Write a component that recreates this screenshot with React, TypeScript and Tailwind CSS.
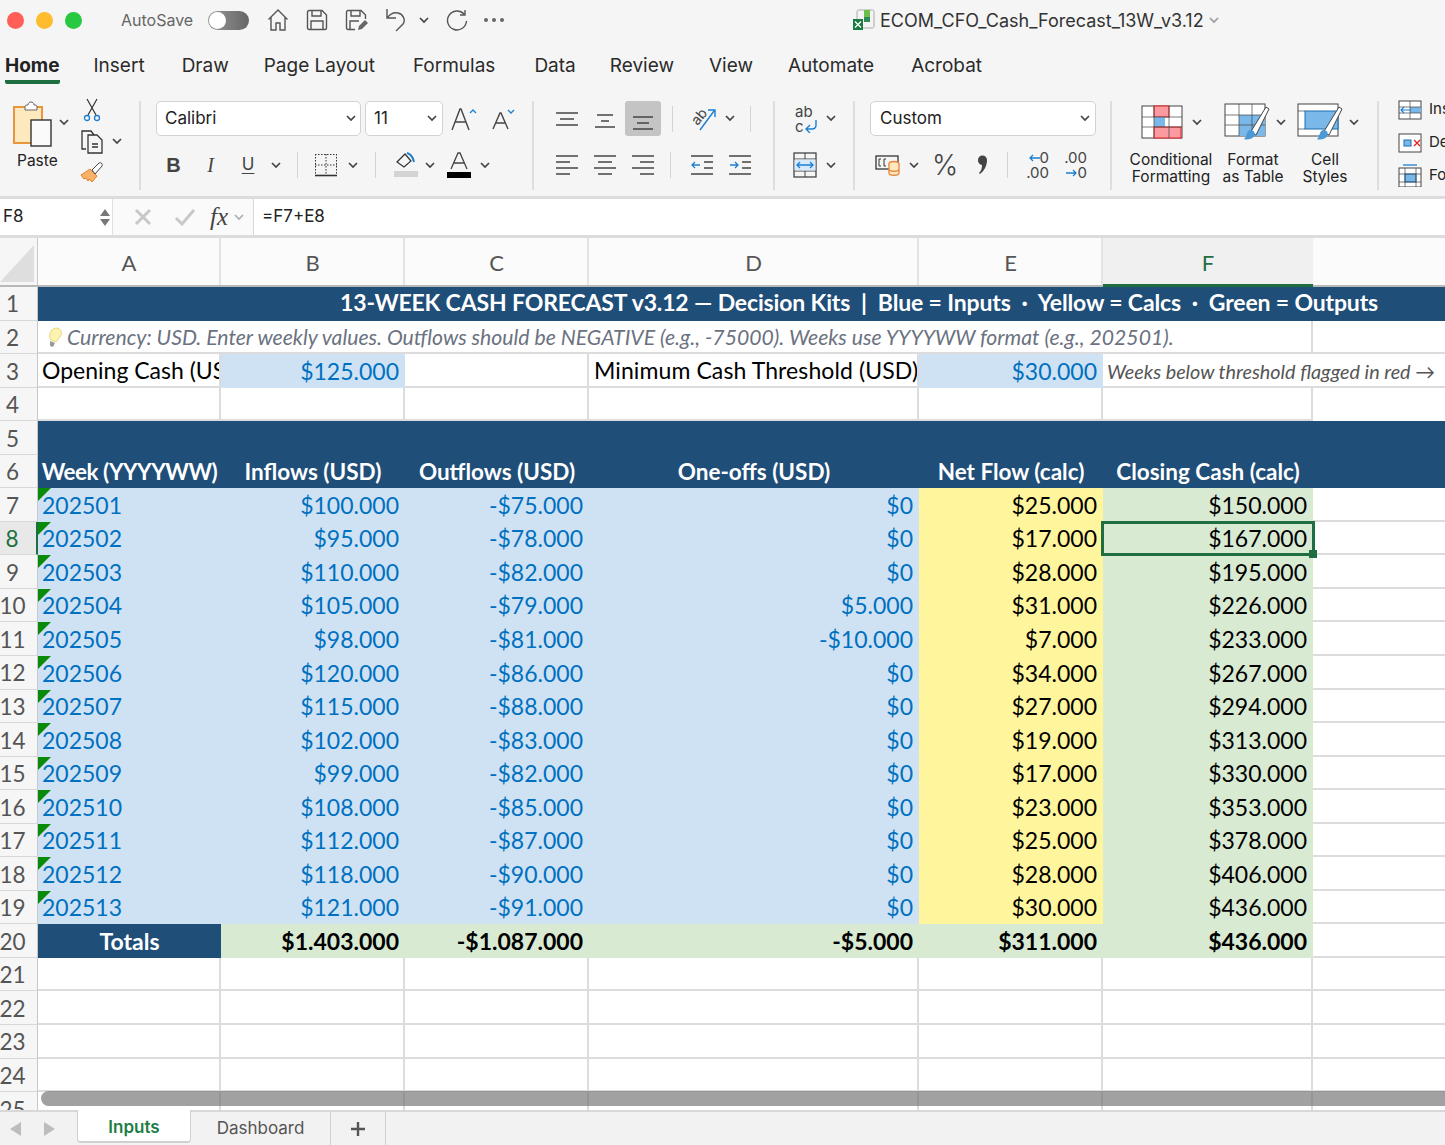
import React from 'react';

const sheetFont = "font-['Lato','Liberation_Sans',sans-serif]";
const uiFont = "font-['Inter','Liberation_Sans',sans-serif]";

const A = 'w-[183px]';
const B = 'w-[184px]';
const C = 'w-[184px]';
const D = 'w-[330px]';
const E = 'w-[184px]';
const F = 'w-[210px]';
const G = 'flex-1';
const colWidths = [A, B, C, D, E, F, G];

const tabs = [
  { label: 'Home', cls: 'ml-[5px] font-bold text-[#222] border-b-[4px] border-[#1e6e42] rounded-b-[2px]' },
  { label: 'Insert', cls: 'ml-[34px]' },
  { label: 'Draw', cls: 'ml-[37px]' },
  { label: 'Page Layout', cls: 'ml-[35px]' },
  { label: 'Formulas', cls: 'ml-[38px]' },
  { label: 'Data', cls: 'ml-[39px]' },
  { label: 'Review', cls: 'ml-[34px]' },
  { label: 'View', cls: 'ml-[35px]' },
  { label: 'Automate', cls: 'ml-[35px]' },
  { label: 'Acrobat', cls: 'ml-[37px]' },
];

const weeks = [
  ['202501', '$100.000', '-$75.000', '$0', '$25.000', '$150.000'],
  ['202502', '$95.000', '-$78.000', '$0', '$17.000', '$167.000'],
  ['202503', '$110.000', '-$82.000', '$0', '$28.000', '$195.000'],
  ['202504', '$105.000', '-$79.000', '$5.000', '$31.000', '$226.000'],
  ['202505', '$98.000', '-$81.000', '-$10.000', '$7.000', '$233.000'],
  ['202506', '$120.000', '-$86.000', '$0', '$34.000', '$267.000'],
  ['202507', '$115.000', '-$88.000', '$0', '$27.000', '$294.000'],
  ['202508', '$102.000', '-$83.000', '$0', '$19.000', '$313.000'],
  ['202509', '$99.000', '-$82.000', '$0', '$17.000', '$330.000'],
  ['202510', '$108.000', '-$85.000', '$0', '$23.000', '$353.000'],
  ['202511', '$112.000', '-$87.000', '$0', '$25.000', '$378.000'],
  ['202512', '$118.000', '-$90.000', '$0', '$28.000', '$406.000'],
  ['202513', '$121.000', '-$91.000', '$0', '$30.000', '$436.000'],
];

const Chev = ({ className = '' }: { className?: string }) => (
  <svg width="10" height="7" viewBox="0 0 10 7" className={className}>
    <path d="M1 1l4 4 4-4" fill="none" stroke="#444" strokeWidth="1.7" />
  </svg>
);

const Lines = ({ rows }: { rows: number[][] }) => (
  <svg width="24" height="24" viewBox="0 0 24 24">
    {rows.map((r, i) => (
      <path key={i} d={`M${r[0]} ${r[2]}H${r[1]}`} stroke="#444" strokeWidth="1.5" />
    ))}
  </svg>
);

const RowHead = ({ n, active }: { n: number; active?: boolean }) => (
  <div
    className={`w-[38px] shrink-0 h-full flex items-center justify-center pr-[12px] pt-[2px] text-[22.5px] font-normal tracking-normal border-b border-[#d8d8d8] ${
      active ? 'bg-[#e8e8e8] text-[#1e6e42] border-r-[2px] border-r-[#1e6e42]' : 'bg-[#f6f6f6] text-[#555] border-r border-r-[#c8c8c8]'
    }`}
  >
    {n}
  </div>
);

const GridCell = ({ w, children, className = '' }: { w: string; children?: React.ReactNode; className?: string }) => (
  <div className={`${w} h-full border-r-2 border-b-2 border-[#dcdcdc] bg-white flex items-center overflow-hidden whitespace-nowrap ${className}`}>
    {children}
  </div>
);

const Fill = ({ w, bg, children, className = '' }: { w: string; bg: string; children?: React.ReactNode; className?: string }) => (
  <div className={`${w} h-full ${bg} flex items-center justify-end pr-[6px] whitespace-nowrap relative ${className}`}>{children}</div>
);

const HeadCell = ({ w, children }: { w: string; children?: React.ReactNode }) => (
  <div className={`${w} h-full flex items-center justify-center whitespace-nowrap`}>{children}</div>
);

const row = 'flex h-[33.55px] shrink-0';

export default function App() {
  return (
    <div className={`w-[1445px] h-[1145px] overflow-hidden bg-white flex flex-col relative ${uiFont}`}>
      {/* Title bar */}
      <div className="h-[42px] shrink-0 bg-[#f5f5f5] flex items-center pb-[2px]">
        <div className="ml-[7px] w-[17px] h-[17px] rounded-full bg-[#ff5f57]" />
        <div className="ml-[12px] w-[17px] h-[17px] rounded-full bg-[#febc2e]" />
        <div className="ml-[12px] w-[17px] h-[17px] rounded-full bg-[#28c840]" />
        <span className="ml-[39px] w-[87px] text-[16px] text-[#666]">AutoSave</span>
        <div className="w-[41px] h-[19px] rounded-full bg-gradient-to-r from-[#999] to-[#666] flex items-center pl-[1px]">
          <div className="w-[17px] h-[17px] rounded-full bg-white" />
        </div>
        <svg width="22" height="24" viewBox="0 0 22 24" className="ml-[18px]" fill="none" stroke="#555" strokeWidth="1.4">
          <path d="M1.5 11.5L11 2l9.5 9.5M4 9.5V22h5v-7h4v7h5V9.5" />
        </svg>
        <svg width="22" height="22" viewBox="0 0 22 22" className="ml-[17px]" fill="none" stroke="#555" strokeWidth="1.4">
          <path d="M3 1.5h13l4.5 4.5v13a1.5 1.5 0 0 1-1.5 1.5H3A1.5 1.5 0 0 1 1.5 19V3A1.5 1.5 0 0 1 3 1.5zM6 1.5V7h9V1.5M5 20.5V12h12v8.5" />
        </svg>
        <svg width="23" height="22" viewBox="0 0 23 22" className="ml-[17px]" fill="none" stroke="#555" strokeWidth="1.4">
          <path d="M10 20.5H3A1.5 1.5 0 0 1 1.5 19V3A1.5 1.5 0 0 1 3 1.5h13L20.5 6v4M6 1.5V7h9V1.5M5 20v-8h9" />
          <path d="M13 21l1-4 6-6 3 3-6 6z" fill="#666" stroke="none" />
        </svg>
        <svg width="24" height="24" viewBox="0 0 24 24" className="ml-[17px]" fill="none" stroke="#555" strokeWidth="1.4">
          <path d="M2 1v9h9M2 10c3-4 7-6 11-5 5 1 8 7 5 11l-7 7" />
        </svg>
        <Chev className="ml-[10px]" />
        <svg width="23" height="23" viewBox="0 0 23 23" className="ml-[16px]" fill="none" stroke="#555" strokeWidth="1.4">
          <path d="M19 5a9.5 9.5 0 1 0 2.5 7M20 1v5h-5" />
        </svg>
        <div className="ml-[16px] flex gap-[4px]">
          <div className="w-[4px] h-[4px] rounded-full bg-[#666]" />
          <div className="w-[4px] h-[4px] rounded-full bg-[#666]" />
          <div className="w-[4px] h-[4px] rounded-full bg-[#666]" />
        </div>
        <svg width="23" height="24" viewBox="0 0 23 24" className="ml-[348px]">
          <rect x="5" y="2" width="17" height="18" rx="1.5" fill="#f4f4f4" stroke="#aaa" />
          <rect x="12" y="2" width="6" height="7" fill="#6cbf4b" />
          <rect x="12" y="9" width="6" height="5" fill="#2e8b57" />
          <rect x="1" y="11" width="10" height="11" fill="#1a7a42" />
          <path d="M3 13.5l6 6M9 13.5l-6 6" stroke="#fff" strokeWidth="1.3" />
        </svg>
        <span className="ml-[5px] text-[18px] text-[#333] whitespace-nowrap">ECOM_CFO_Cash_Forecast_13W_v3.12</span>
        <Chev className="ml-[5px] opacity-50" />
      </div>

      {/* Tabs */}
      <div className="h-[46px] shrink-0 bg-[#f5f5f5] flex items-start text-[19px] text-[#2b2b2b]">
        {tabs.map((t) => (
          <div key={t.label} className={`h-[42px] pt-[10px] leading-[28px] whitespace-nowrap ${t.cls}`}>
            {t.label}
          </div>
        ))}
      </div>

      {/* Ribbon */}
      <div className="h-[108px] shrink-0 bg-[#f5f5f5] flex items-start pt-[13px]">
        {/* Clipboard */}
        <div className="w-[141px] h-[89px] shrink-0 border-r-2 border-[#dedede] flex">
          <div className="w-[64px] ml-[12px] flex flex-col items-start">
            <svg width="43" height="47" viewBox="0 0 43 47" fill="none">
              <path d="M2 6h28v36H2z" stroke="#e8963c" strokeWidth="2" fill="#fde9bd" />
              <path d="M13 6c0-2 1-2 3-2 0-4 6-4 6 0 2 0 3 0 3 2v3H13z" fill="#fff" stroke="#666" />
              <rect x="19" y="19" width="20" height="26" fill="#fafafa" stroke="#333" strokeWidth="1.4" />
            </svg>
            <span className="ml-[5px] mt-[1px] text-[15.5px] text-[#222]">Paste</span>
          </div>
          <Chev className="-ml-[17px] mt-[18px]" />
          <div className="ml-[11px] flex flex-col items-start">
            <svg width="18" height="24" viewBox="0 0 18 24" fill="none" className="-mt-[3px] ml-[3px]">
              <path d="M4 1l9 16M14 1L5 17" stroke="#333" strokeWidth="1.2" />
              <circle cx="4" cy="20" r="2.5" stroke="#1c7fd0" strokeWidth="1.3" />
              <circle cx="14" cy="20" r="2.5" stroke="#1c7fd0" strokeWidth="1.3" />
            </svg>
            <div className="flex items-center mt-[7px]">
              <svg width="24" height="25" viewBox="0 0 24 25" fill="none" stroke="#333" strokeWidth="1.3">
                <path d="M6 20H2V2h9l3 4" />
                <path d="M8 6h9l5 5v13H8zM12 15h6M12 18h6" />
              </svg>
              <Chev className="ml-[8px]" />
            </div>
            <svg width="24" height="22" viewBox="0 0 24 22" className="mt-[7px]">
              <path d="M1 14l9-6 7 7-5 6-3-3-1 2-2-3-2 1z" fill="#f7b267" stroke="#e2832a" />
              <path d="M12 9l3 4 7-8c1-2-1-4-3-3z" fill="#fff" stroke="#444" />
            </svg>
          </div>
        </div>

        {/* Font */}
        <div className="w-[393px] h-[89px] shrink-0 border-r-2 border-[#dedede] flex flex-col pl-[15px]">
          <div className="flex items-center h-[35px]">
            <div className="w-[205px] h-[35px] bg-white rounded-[5px] border border-[#d2d2d2] flex items-center justify-between pl-[8px] pr-[4px] text-[17px] text-[#222]">
              Calibri <Chev />
            </div>
            <div className="ml-[4px] w-[78px] h-[35px] bg-white rounded-[5px] border border-[#d2d2d2] flex items-center justify-between pl-[8px] pr-[5px] text-[17px] text-[#222]">
              11 <Chev />
            </div>
            <svg width="26" height="26" viewBox="0 0 26 26" className="ml-[8px]" fill="none">
              <path d="M1 24L9 3h1l8 21M4.5 16h11" stroke="#444" strokeWidth="1.4" />
              <path d="M19 7l3-3 3 3" stroke="#1c7fd0" strokeWidth="1.3" />
            </svg>
            <svg width="24" height="24" viewBox="0 0 24 24" className="ml-[14px]" fill="none">
              <path d="M2 22L9 6h1l7 16M5 16h9" stroke="#444" strokeWidth="1.4" />
              <path d="M17 3l3 3 3-3" stroke="#1c7fd0" strokeWidth="1.3" />
            </svg>
          </div>
          <div className="flex items-center mt-[15px] h-[28px]">
            <span className="ml-[9px] w-[17px] text-center text-[20px] font-bold text-[#444] font-['Liberation_Sans',sans-serif]">B</span>
            <span className="ml-[22px] w-[13px] text-center text-[20px] italic text-[#444] font-['Liberation_Serif',serif]">I</span>
            <span className="ml-[23px] w-[16px] text-center text-[17px] underline underline-offset-[3px] text-[#444]">U</span>
            <Chev className="ml-[15px]" />
            <div className="ml-[16px] w-[1px] h-[26px] bg-[#d4d4d4]" />
            <svg width="24" height="24" viewBox="0 0 24 24" className="ml-[16px]" fill="none" stroke="#333">
              <path d="M1 1.5h22M1 12h22M12 1v20M1.5 1v20M22.5 1v20" strokeDasharray="1.5 1.5" />
              <path d="M1 22.5h22" strokeWidth="1.6" />
            </svg>
            <Chev className="ml-[10px]" />
            <div className="ml-[17px] w-[1px] h-[26px] bg-[#d4d4d4]" />
            <svg width="24" height="26" viewBox="0 0 24 26" className="ml-[18px]" fill="none">
              <path d="M3 10l8-8 6 7-7 6z" stroke="#333" strokeWidth="1.2" />
              <path d="M13 1c4 1 6 4 7 9" stroke="#1c7fd0" strokeWidth="2" />
              <rect x="0" y="19" width="24" height="6" fill="#d4d4d4" />
            </svg>
            <Chev className="ml-[7px]" />
            <svg width="24" height="26" viewBox="0 0 24 26" className="ml-[12px]" fill="none">
              <path d="M4 17L11 1h2l7 16M7 11h10" stroke="#444" strokeWidth="1.3" />
              <rect x="0" y="20" width="24" height="6" fill="#000" />
            </svg>
            <Chev className="ml-[9px]" />
          </div>
        </div>

        {/* Alignment */}
        <div className="w-[241px] h-[89px] shrink-0 border-r-2 border-[#dedede] flex flex-col">
          <div className="flex items-center h-[35px]">
            <div className="ml-[21px]"><Lines rows={[[1, 23, 6], [5, 19, 12], [1, 23, 18]]} /></div>
            <div className="ml-[14px]"><Lines rows={[[4, 20, 8], [8, 16, 14], [2, 22, 20]]} /></div>
            <div className="ml-[8px] w-[36px] h-[35px] rounded-[3px] bg-[#c4c4c4] flex items-center justify-center">
              <Lines rows={[[2, 22, 10], [6, 18, 16], [2, 22, 22]]} />
            </div>
            <div className="ml-[11px] w-[1px] h-[26px] bg-[#d4d4d4]" />
            <svg width="26" height="26" viewBox="0 0 26 26" className="ml-[18px] overflow-visible" fill="none">
              <text x="1" y="16" fontSize="14" fill="#444" fontFamily="Inter, sans-serif" transform="rotate(-50 8 12)">ab</text>
              <path d="M9 24L23 5M17 4h7v7" stroke="#1c7fd0" strokeWidth="1.4" />
            </svg>
            <Chev className="ml-[8px]" />
            <div className="ml-[15px] w-[1px] h-[26px] bg-[#d4d4d4]" />
          </div>
          <div className="flex items-center mt-[15px] h-[28px]">
            <div className="ml-[21px]"><Lines rows={[[1, 23, 3], [1, 15, 9], [1, 23, 15], [1, 15, 21]]} /></div>
            <div className="ml-[14px]"><Lines rows={[[1, 23, 3], [5, 19, 9], [1, 23, 15], [5, 19, 21]]} /></div>
            <div className="ml-[14px]"><Lines rows={[[1, 23, 3], [9, 23, 9], [1, 23, 15], [9, 23, 21]]} /></div>
            <div className="ml-[15px] w-[1px] h-[26px] bg-[#d4d4d4]" />
            <svg width="24" height="24" viewBox="0 0 24 24" className="ml-[19px]" fill="none">
              <path d="M1 3h22M14 9h9M14 15h9M1 21h22" stroke="#444" strokeWidth="1.4" />
              <path d="M10 12H2M5 9l-3 3 3 3" stroke="#1c7fd0" strokeWidth="1.3" />
            </svg>
            <svg width="24" height="24" viewBox="0 0 24 24" className="ml-[14px]" fill="none">
              <path d="M1 3h22M14 9h9M14 15h9M1 21h22" stroke="#444" strokeWidth="1.4" />
              <path d="M2 12h8M7 9l3 3-3 3" stroke="#1c7fd0" strokeWidth="1.3" />
            </svg>
          </div>
        </div>

        {/* Wrap and merge */}
        <div className="w-[80px] h-[89px] shrink-0 border-r-2 border-[#dedede] flex flex-col">
          <div className="flex items-center h-[35px] pl-[20px]">
            <div className="w-[24px] h-[30px] flex flex-col text-[15px] leading-[15px] text-[#444]">
              <span>ab</span>
              <span className="flex items-center">
                c
                <svg width="14" height="14" viewBox="0 0 14 14" fill="none">
                  <path d="M12 1v5c0 3-2 4-4 4H2M6 6l-4 4 4 4" stroke="#1c7fd0" strokeWidth="1.4" />
                </svg>
              </span>
            </div>
            <Chev className="ml-[7px]" />
          </div>
          <div className="flex items-center mt-[15px] h-[28px] pl-[18px]">
            <svg width="24" height="26" viewBox="0 0 24 26" fill="none">
              <rect x="1" y="1" width="22" height="24" stroke="#444" strokeWidth="1.3" />
              <path d="M1 7h22M1 19h22M12 1v6M12 19v6" stroke="#444" />
              <rect x="1.5" y="7.5" width="21" height="11" fill="#d8eafa" />
              <path d="M4 13h16M7 10l-3 3 3 3M17 10l3 3-3 3" stroke="#1c7fd0" strokeWidth="1.3" />
            </svg>
            <Chev className="ml-[9px]" />
          </div>
        </div>

        {/* Number */}
        <div className="w-[257px] h-[89px] shrink-0 border-r-2 border-[#dedede] flex flex-col pl-[15px]">
          <div className="w-[226px] h-[35px] bg-white rounded-[5px] border border-[#d2d2d2] flex items-center justify-between pl-[9px] pr-[5px] text-[17px] text-[#222]">
            Custom <Chev />
          </div>
          <div className="flex items-center mt-[15px] h-[28px]">
            <svg width="26" height="24" viewBox="0 0 26 24" className="ml-[5px]" fill="none">
              <rect x="1" y="3" width="22" height="13" stroke="#333" strokeWidth="1.3" />
              <path d="M6 6H4v7h2M11 6H9v7h2" stroke="#333" />
              <ellipse cx="19" cy="11" rx="5" ry="2.5" fill="#fde9bd" stroke="#e8863c" strokeWidth="1.3" />
              <path d="M14 11v9c0 3 10 3 10 0v-9M14 16c0 3 10 3 10 0" fill="#fde9bd" stroke="#e8863c" strokeWidth="1.3" />
            </svg>
            <Chev className="ml-[8px]" />
            <span className="ml-[13px] w-[24px] text-center text-[28px] font-light text-[#444]">%</span>
            <svg width="11" height="20" viewBox="0 0 11 20" className="ml-[21px]">
              <path d="M1 5a4.5 4.5 0 0 1 9 0c0 6-3 11-7 14l-1-1c2-2 3-4 3-8a4.5 4.5 0 0 1-4-5z" fill="#444" />
            </svg>
            <div className="ml-[19px] w-[1px] h-[26px] bg-[#d4d4d4]" />
            <div className="ml-[18px] w-[23px] text-[15px] leading-[15px] text-[#444] flex flex-col items-end">
              <span className="flex items-center">
                <svg width="12" height="10" viewBox="0 0 12 10" fill="none"><path d="M12 5H2M5 2L2 5l3 3" stroke="#1c7fd0" strokeWidth="1.3" /></svg>
                0
              </span>
              <span>.00</span>
            </div>
            <div className="ml-[15px] w-[23px] text-[15px] leading-[15px] text-[#444] flex flex-col items-end">
              <span>.00</span>
              <span className="flex items-center">
                <svg width="12" height="10" viewBox="0 0 12 10" fill="none"><path d="M0 5h10M7 2l3 3-3 3" stroke="#1c7fd0" strokeWidth="1.3" /></svg>
                0
              </span>
            </div>
          </div>
        </div>

        {/* Styles */}
        <div className="w-[267px] h-[89px] shrink-0 border-r-2 border-[#dedede] flex text-[15.5px] leading-[17px] text-[#222] text-center">
          <div className="w-[102px] ml-[8px] flex flex-col items-center">
            <div className="flex items-center h-[42px] ml-[1px]">
              <svg width="42" height="34" viewBox="0 0 42 34" fill="none">
                <rect x="1" y="1" width="40" height="32" fill="#fff" stroke="#444" />
                <rect x="13" y="1" width="15" height="11" fill="#fb9aa0" stroke="#e02020" />
                <rect x="13" y="12" width="11" height="10" fill="#7ab8ea" />
                <rect x="13" y="22" width="27" height="11" fill="#fb9aa0" stroke="#e02020" />
                <path d="M13 1v32M28 1v32M1 12h40M1 22h40" stroke="#444" strokeWidth="0.7" />
              </svg>
              <Chev className="ml-[9px]" />
            </div>
            <span className="mt-[8px] whitespace-nowrap">Conditional<br />Formatting</span>
          </div>
          <div className="w-[62px] flex flex-col items-center">
            <div className="flex items-center h-[42px] ml-[4px] shrink-0">
              <svg width="46" height="38" viewBox="0 0 46 38" fill="none" className="shrink-0">
                <rect x="1" y="1" width="40" height="32" fill="#fff" stroke="#444" />
                <rect x="15" y="12" width="26" height="21" fill="#7ab8ea" />
                <path d="M15 1v32M28 1v32M1 12h40M1 22h40" stroke="#444" strokeWidth="0.7" />
                <path d="M26 30L42 4l3 2-13 26z" fill="#fff" stroke="#444" />
                <path d="M26 27c4 0 6 3 4 6-2 4-8 4-10 3 3-2 2-8 6-9z" fill="#4a9ad8" />
              </svg>
              <Chev className="ml-[6px] shrink-0" />
            </div>
            <span className="mt-[8px] whitespace-nowrap">Format<br />as Table</span>
          </div>
          <div className="w-[82px] flex flex-col items-center">
            <div className="flex items-center h-[42px] ml-[6px]">
              <svg width="46" height="38" viewBox="0 0 46 38" fill="none" className="shrink-0">
                <rect x="1" y="1" width="40" height="32" fill="#fff" stroke="#444" />
                <rect x="8" y="8" width="33" height="18" fill="#7ab8ea" stroke="#1c6fb0" />
                <path d="M1 8h7M1 26h7" stroke="#444" strokeWidth="0.7" />
                <path d="M26 30L42 4l3 2-13 26z" fill="#fff" stroke="#444" />
                <path d="M26 27c4 0 6 3 4 6-2 4-8 4-10 3 3-2 2-8 6-9z" fill="#4a9ad8" />
              </svg>
              <Chev className="ml-[6px] shrink-0" />
            </div>
            <span className="mt-[8px]">Cell<br />Styles</span>
          </div>
        </div>

        {/* Cells */}
        <div className="flex-1 overflow-hidden pl-[19px] -mt-[3px] flex flex-col gap-[10px] text-[15px] text-[#222]">
          <div className="flex items-center h-[23px] whitespace-nowrap">
            <svg width="24" height="20" viewBox="0 0 24 20" fill="none" className="shrink-0">
              <rect x="1" y="1" width="22" height="18" fill="#fff" stroke="#444" />
              <rect x="12" y="7" width="11" height="6" fill="#7ab8ea" />
              <path d="M1 7h22M1 13h22M12 1v18" stroke="#444" strokeWidth="0.7" />
              <path d="M13 10H3M6 7l-3 3 3 3" stroke="#1c7fd0" strokeWidth="1.2" />
            </svg>
            <span className="ml-[7px]">Insert</span>
          </div>
          <div className="flex items-center h-[23px] whitespace-nowrap">
            <svg width="24" height="20" viewBox="0 0 24 20" fill="none" className="shrink-0">
              <rect x="1" y="1" width="22" height="18" fill="#fff" stroke="#444" />
              <rect x="6" y="7" width="7" height="6" fill="#7ab8ea" stroke="#1c6fb0" />
              <path d="M16 7l6 6M22 7l-6 6" stroke="#e02020" strokeWidth="1.3" />
            </svg>
            <span className="ml-[7px]">Delete</span>
          </div>
          <div className="flex items-center h-[23px] whitespace-nowrap">
            <svg width="24" height="24" viewBox="0 0 24 24" fill="none" className="shrink-0">
              <rect x="1" y="4" width="22" height="19" fill="#fff" stroke="#444" />
              <rect x="7" y="10" width="11" height="8" fill="#7ab8ea" stroke="#1c6fb0" />
              <path d="M1 10h22M1 18h22M7 4v19M18 4v19" stroke="#444" strokeWidth="0.7" />
              <path d="M5 1h14" stroke="#1c7fd0" strokeWidth="1.3" />
            </svg>
            <span className="ml-[7px]">Format</span>
          </div>
        </div>
      </div>

      {/* Formula bar */}
      <div className="h-[42px] shrink-0 bg-[#f5f5f5] border-t-[3px] border-[#dcdcdc] border-b-[3px] flex text-[#222]">
        <div className="w-[112px] shrink-0 bg-white flex items-center justify-between pl-[3px] pr-[2px] text-[17px]">
          F8
          <div className="flex flex-col gap-[3px]">
            <div className="w-0 h-0 border-x-[5px] border-x-transparent border-b-[7px] border-b-[#777]" />
            <div className="w-0 h-0 border-x-[5px] border-x-transparent border-t-[7px] border-t-[#777]" />
          </div>
        </div>
        <div className="w-[141px] shrink-0 bg-[#fafafa] border-l border-[#e0e0e0] flex items-center">
          <svg width="18" height="18" viewBox="0 0 18 18" className="ml-[21px]">
            <path d="M2 2l14 14M16 2L2 16" stroke="#c8c8c8" strokeWidth="3" />
          </svg>
          <svg width="22" height="18" viewBox="0 0 22 18" className="ml-[22px]">
            <path d="M2 10l6 6L20 2" fill="none" stroke="#c8c8c8" strokeWidth="3" />
          </svg>
          <span className="ml-[14px] text-[25px] italic text-[#444] font-['Liberation_Serif',serif]">fx</span>
          <Chev className="ml-[6px] opacity-40" />
        </div>
        <div className="flex-1 bg-white border-l border-[#d8d8d8] flex items-center pl-[8px] text-[17px]">=F7+E8</div>
      </div>

      {/* Sheet */}
      <div className={`flex-1 min-h-0 overflow-hidden flex flex-col relative ${sheetFont}`}>
        {/* Column letters */}
        <div className="flex h-[49px] shrink-0 bg-[#fbfbfb] border-b-2 border-[#b8b8b8] text-[22px] text-[#555]">
          <div className="w-[38px] shrink-0 bg-[#f6f6f6] border-r border-[#c8c8c8] flex items-end pb-[3px]">
            <div className="w-0 h-0 border-l-[34px] border-l-transparent border-b-[37px] border-b-[#dedede]" />
          </div>
          {['A', 'B', 'C', 'D', 'E'].map((l, i) => (
            <div key={l} className={`${colWidths[i]} flex items-center justify-center pt-[2px] pl-[1px] border-r-2 border-[#e4e4e4]`}>
              {l}
            </div>
          ))}
          <div className={`${F} flex items-center justify-center pt-[2px] bg-[#f0f0f0] text-[#1e6e42] border-b-[3px] border-[#1e6e42] -mb-[2px]`}>F</div>
          <div className={G} />
        </div>

        {/* Row 1 */}
        <div className={row}>
          <RowHead n={1} />
          <div className="flex-1 bg-[#1f4e79] flex items-center pl-[302px] pb-[3px] text-[23px] font-bold text-white whitespace-nowrap tracking-[-0.15px]">
            13-WEEK CASH FORECAST v3.12 — Decision Kits&nbsp; |&nbsp; Blue = Inputs&nbsp; ·&nbsp; Yellow = Calcs&nbsp; ·&nbsp; Green = Outputs
          </div>
        </div>

        {/* Row 2 */}
        <div className={row}>
          <RowHead n={2} />
          <div className="w-[1275px] h-full bg-white border-r-2 border-b-2 border-[#dcdcdc] flex items-center pl-[9px] pt-[4px] text-[21.2px] italic text-[#6b7280] whitespace-nowrap">
            <svg width="16" height="22" viewBox="0 0 16 22" className="shrink-0 mr-[4px]">
              <path d="M4 13C1 9 3 2 9 1c5 0 7 5 4 9-2 2-3 4-4 5z" fill="#fdf3b0" stroke="#e8d878" />
              <path d="M3 14l5 2-2 4-3-1z" fill="#999" />
            </svg>
            Currency: USD. Enter weekly values. Outflows should be NEGATIVE (e.g., -75000). Weeks use YYYYWW format (e.g., 202501).
          </div>
          <div className={`${G} h-full border-b-2 border-[#dcdcdc]`} />
        </div>

        {/* Row 3 */}
        <div className={`${row} text-[23px] text-black`}>
          <RowHead n={3} />
          <GridCell w={A} className="pl-[4px]">Opening Cash (US</GridCell>
          <Fill w={B} bg="bg-[#cfe2f3]" className="text-[#0070c0]">$125.000</Fill>
          <GridCell w={C} />
          <GridCell w={D} className="pl-[5px] tracking-[0.1px]">Minimum Cash Threshold (USD)</GridCell>
          <Fill w={E} bg="bg-[#cfe2f3]" className="text-[#0070c0]">$30.000</Fill>
          <div className={`${F} h-full border-b-2 border-[#dcdcdc] flex items-center pl-[4px] pt-[3px] whitespace-nowrap text-[19.8px] italic text-[#555] overflow-visible`}>
            Weeks below threshold flagged in red →
          </div>
          <div className={`${G} h-full border-b-2 border-[#dcdcdc]`} />
        </div>

        {/* Row 4 */}
        <div className={row}>
          <RowHead n={4} />
          <GridCell w={A} />
          <GridCell w={B} />
          <GridCell w={C} />
          <GridCell w={D} />
          <GridCell w={E} />
          <GridCell w={F} />
          <div className={`${G} h-full`} />
        </div>

        {/* Rows 5-6 */}
        <div className={row}>
          <RowHead n={5} />
          <div className="flex-1 bg-[#1f4e79]" />
        </div>
        <div className={`${row} text-[22.5px] font-bold text-white`}>
          <RowHead n={6} />
          <div className="flex-1 flex bg-[#1f4e79]">
            <HeadCell w={A}><span className="tracking-[-0.5px]">Week (YYYYWW)</span></HeadCell>
            <HeadCell w={B}>Inflows (USD)</HeadCell>
            <HeadCell w={C}>Outflows (USD)</HeadCell>
            <HeadCell w={D}>One-offs (USD)</HeadCell>
            <HeadCell w={E}>Net Flow (calc)</HeadCell>
            <HeadCell w={F}>Closing Cash (calc)</HeadCell>
            <div className={G} />
          </div>
        </div>

        {/* Weeks */}
        {weeks.map((w, i) => {
          const selected = i === 1;
          return (
            <div key={w[0]} className={`${row} text-[23px] text-[#0070c0]`}>
              <RowHead n={i + 7} active={selected} />
              <div className={`${A} h-full bg-[#cfe2f3] flex items-center pl-[4px] relative`}>
                <div className="absolute left-0 top-0 w-0 h-0 border-t-[13px] border-t-[#0a8a0a] border-r-[13px] border-r-transparent" />
                {w[0]}
              </div>
              <Fill w={B} bg="bg-[#cfe2f3]">{w[1]}</Fill>
              <Fill w={C} bg="bg-[#cfe2f3]">{w[2]}</Fill>
              <Fill w={D} bg="bg-[#cfe2f3]">{w[3]}</Fill>
              <Fill w={E} bg="bg-[#fff59d]" className="text-black">{w[4]}</Fill>
              <Fill w={F} bg="bg-[#d9ead3]" className="text-black">
                {selected && (
                  <div className="absolute -left-[2px] -right-[2px] -top-[1px] -bottom-[1px] border-[3px] border-[#1e6e42] z-10">
                    <div className="absolute -right-[5px] -bottom-[5px] w-[8px] h-[8px] bg-[#1e6e42]" />
                  </div>
                )}
                {w[5]}
              </Fill>
              <div className={`${G} h-full border-b-2 border-[#dcdcdc]`} />
            </div>
          );
        })}

        {/* Totals */}
        <div className={`${row} text-[23px] font-bold text-black`}>
          <RowHead n={20} />
          <div className={`${A} h-full bg-[#1f4e79] flex items-center justify-center text-white`}>Totals</div>
          <Fill w={B} bg="bg-[#d9ead3]">$1.403.000</Fill>
          <Fill w={C} bg="bg-[#d9ead3]">-$1.087.000</Fill>
          <Fill w={D} bg="bg-[#d9ead3]">-$5.000</Fill>
          <Fill w={E} bg="bg-[#d9ead3]">$311.000</Fill>
          <Fill w={F} bg="bg-[#d9ead3]">$436.000</Fill>
          <div className={`${G} h-full border-b-2 border-[#dcdcdc]`} />
        </div>

        {/* Empty rows */}
        {[21, 22, 23, 24, 25].map((n) => (
          <div key={n} className={row}>
            <RowHead n={n} />
            <GridCell w={A} />
            <GridCell w={B} />
            <GridCell w={C} />
            <GridCell w={D} />
            <GridCell w={E} />
            <GridCell w={F} />
            <div className={`${G} h-full border-b-2 border-[#dcdcdc]`} />
          </div>
        ))}

        {/* Scrollbar */}
        <div className="absolute left-[41px] -right-[10px] bottom-[4px] h-[15px] rounded-full bg-[#6e6e6e]/65" />
      </div>

      {/* Sheet tabs */}
      <div className={`h-[35px] shrink-0 bg-[#f2f2f2] border-t-2 border-[#d8d8d8] flex items-start ${uiFont}`}>
        <div className="h-full flex items-center ml-[10px]">
          <div className="w-0 h-0 border-y-[7px] border-y-transparent border-r-[11px] border-r-[#bdbdbd]" />
          <div className="ml-[23px] w-0 h-0 border-y-[7px] border-y-transparent border-l-[11px] border-l-[#bdbdbd]" />
        </div>
        <div className="ml-[22px] w-[114px] h-[33px] -mt-[2px] pt-[4px] bg-white border-x border-b-2 border-[#d0d0d0] rounded-b-[4px] flex items-center justify-center text-[17px] font-semibold text-[#1e7e45]">
          Inputs
        </div>
        <div className="w-[140px] h-[33px] border-r border-[#d0d0d0] flex items-center justify-center text-[17px] text-[#555]">
          Dashboard
        </div>
        <div className="w-[55px] h-[33px] border-r border-[#d0d0d0] flex items-center justify-center">
          <svg width="16" height="16" viewBox="0 0 16 16"><path d="M8 1v14M1 8h14" stroke="#555" strokeWidth="2.4" /></svg>
        </div>
      </div>
    </div>
  );
}
